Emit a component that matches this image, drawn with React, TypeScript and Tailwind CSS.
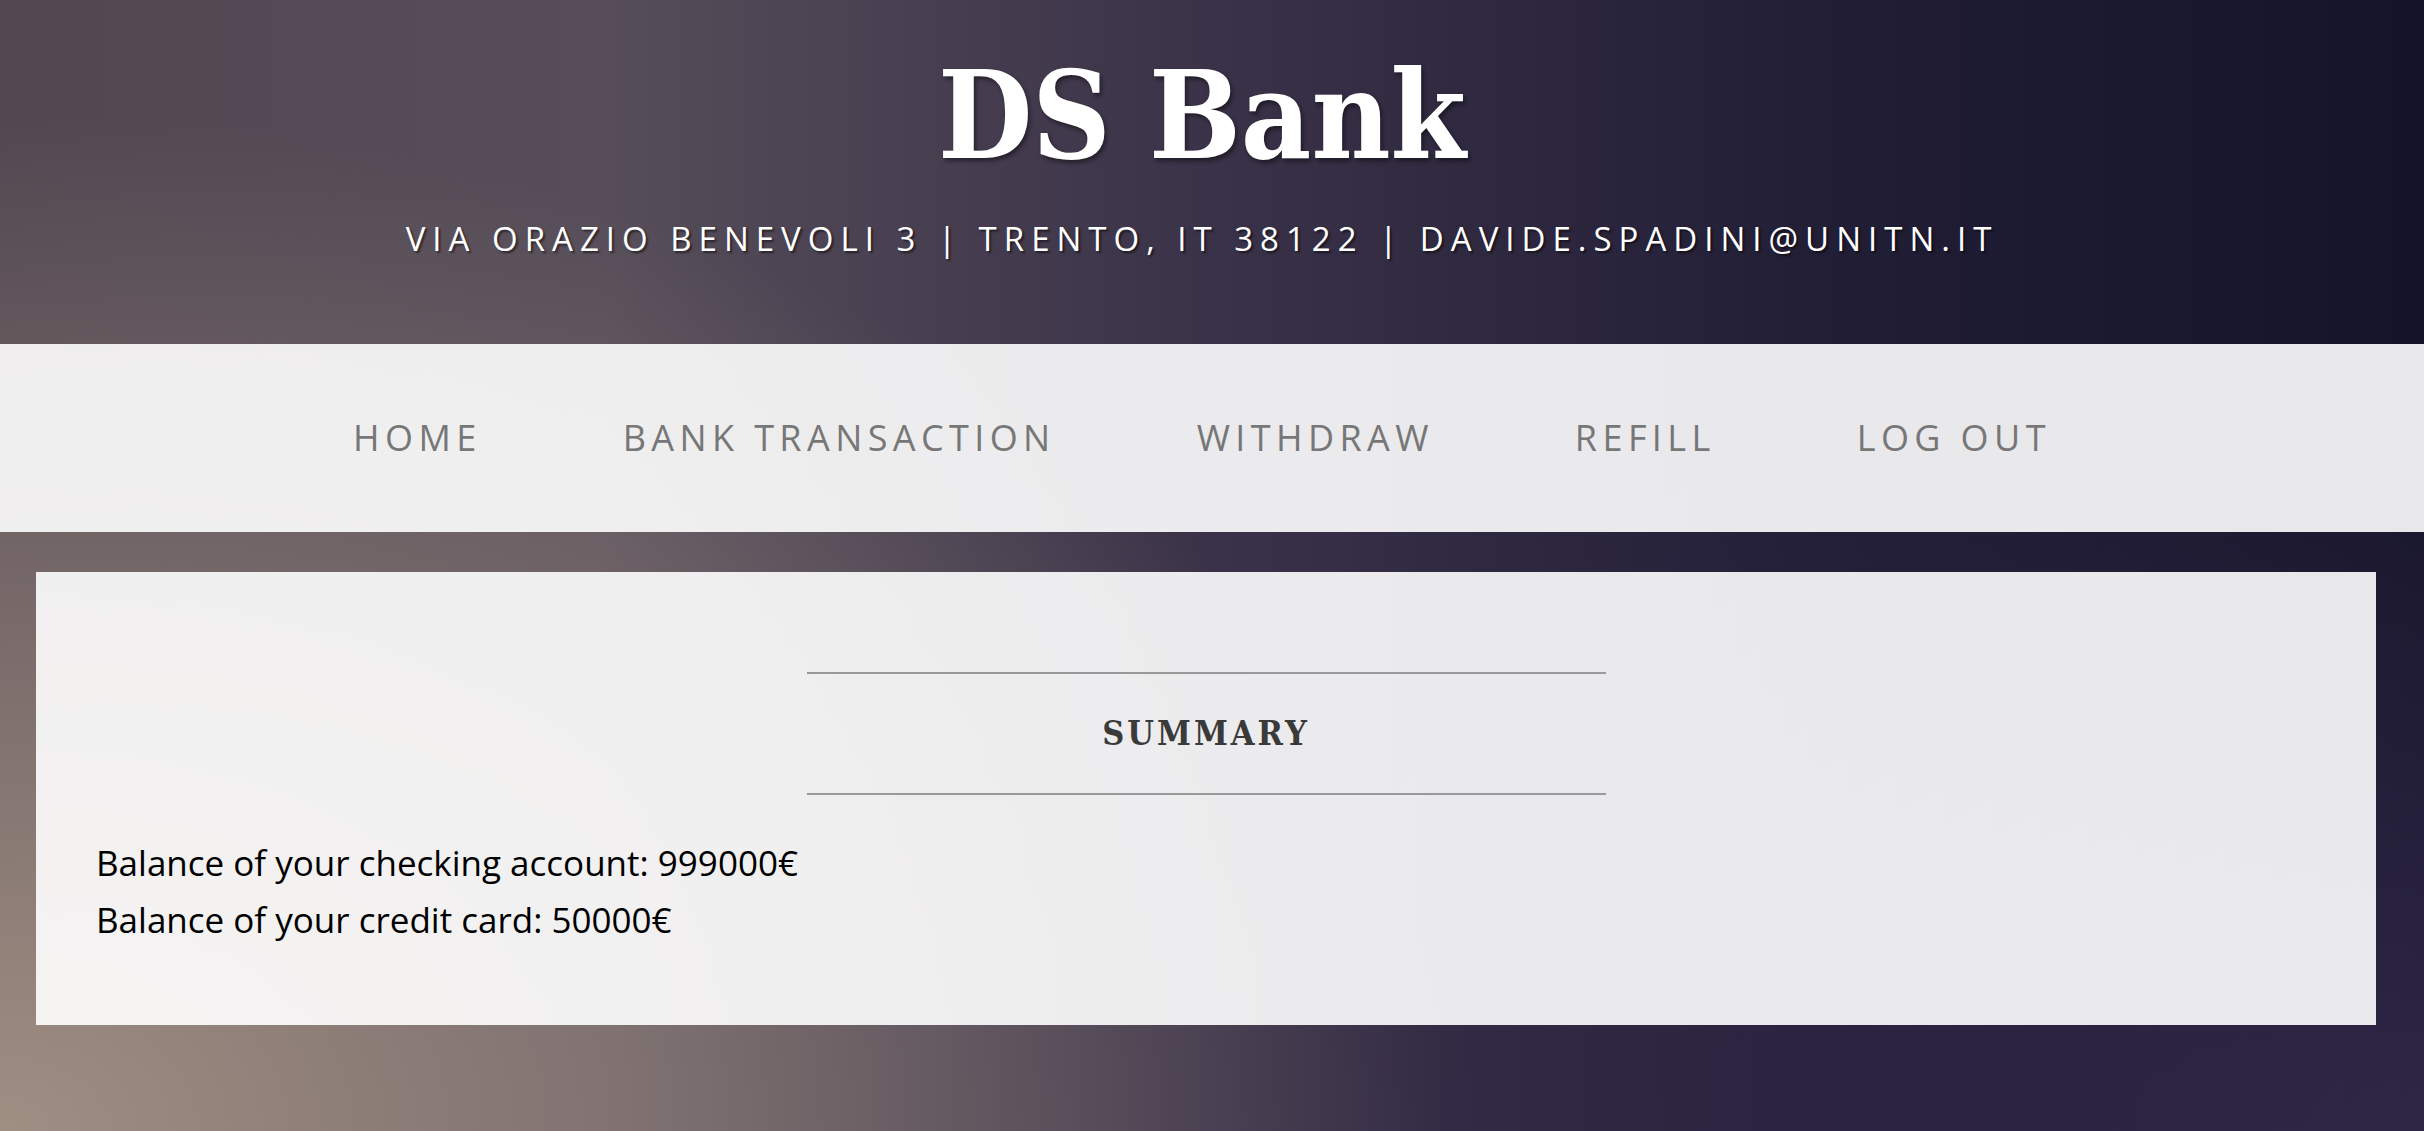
import React from "react";

const navItems = ["Home", "Bank Transaction", "Withdraw", "Refill", "Log Out"];

export default function App() {
  return (
    <div className="min-h-screen w-full overflow-hidden bg-[radial-gradient(ellipse_60%_90%_at_0%_100%,rgba(168,150,136,0.9),rgba(168,150,136,0)_100%),radial-gradient(ellipse_55%_70%_at_100%_100%,rgba(58,46,82,0.7),rgba(58,46,82,0)_100%),linear-gradient(to_right,#524751_0%,#564d59_25%,#3a3248_50%,#211e36_75%,#141428_100%)] font-['Open_Sans',sans-serif]">
      {/* brand + address */}
      <header className="flex h-[344px] flex-col items-center pr-[20px]">
        <h1 className="mt-[46px] font-['DejaVu_Serif_Condensed','DejaVu_Serif',serif] text-[121px] leading-[140px] font-bold font-stretch-condensed text-white [text-shadow:2px_3px_4px_rgba(0,0,0,0.45)]">
          DS Bank
        </h1>
        <p className="mt-[31px] text-[33px] leading-[44px] tracking-[7px] text-white uppercase [text-shadow:2px_2px_2px_rgba(0,0,0,0.5)]">
          Via Orazio Benevoli 3 | Trento, IT 38122 | davide.spadini@unitn.it
        </p>
      </header>

      {/* navigation */}
      <nav className="flex h-[188px] items-center justify-center gap-[141px] bg-white/90 pr-[20px]">
        {navItems.map((item) => (
          <a
            key={item}
            href="#"
            className="text-[36px] leading-none tracking-[5.4px] text-[#777] uppercase"
          >
            {item}
          </a>
        ))}
      </nav>

      {/* summary box */}
      <main className="mt-[40px] mr-[48px] ml-[36px] h-[453px] bg-white/90 px-[60px] pt-[100px]">
        <div className="mx-auto w-[799px]">
          <hr className="border-t-2 border-[#999]" />
          <h2 className="flex h-[119px] items-center justify-center font-['DejaVu_Serif_Condensed','DejaVu_Serif',serif] text-[34px] font-semibold font-stretch-condensed tracking-[3px] text-[#3a3a3a] uppercase">
            Summary
          </h2>
          <hr className="border-t-2 border-[#999]" />
        </div>
        <div className="mt-[39px] text-[35px] leading-[57px] text-black">
          <p>Balance of your checking account: 999000€</p>
          <p>Balance of your credit card: 50000€</p>
        </div>
      </main>
    </div>
  );
}
